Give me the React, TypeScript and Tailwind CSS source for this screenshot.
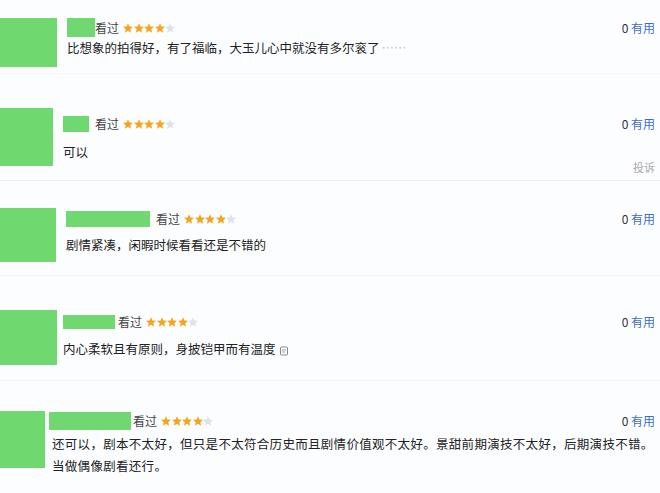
import React from "react";

type Row = {
  block: string;
  avatar: string;
  content: string;
  name: string;
  seen: string;
  body: string;
  text: string;
  more?: string;
  report?: boolean;
  icon?: boolean;
};

const rows: Row[] = [
  {
    block: "h-[74px] border-b border-[#f6f7f9]",
    avatar: "mt-[18px] h-[49px] w-[57px]",
    content: "pt-[18px] pl-[10px]",
    name: "h-[19px] w-[28px]",
    seen: "ml-0",
    body: "mt-[1px] leading-[20px]",
    text: "比想象的拍得好，有了福临，大玉儿心中就没有多尔衮了",
  },
  {
    block: "h-[107px] border-b border-[#eceef2]",
    avatar: "mt-[34px] h-[58px] w-[53px]",
    content: "pt-[41px] pl-[10px]",
    name: "h-[16px] w-[26px]",
    seen: "ml-[6px]",
    body: "mt-[9px] leading-[20px]",
    text: "可以",
    report: true,
  },
  {
    block: "h-[95px] border-b border-[#eff1f4]",
    avatar: "mt-[27px] h-[54px] w-[56px]",
    content: "pt-[29px] pl-[10px]",
    name: "h-[16px] w-[84px]",
    seen: "ml-[6px]",
    body: "mt-[7px] leading-[20px]",
    text: "剧情紧凑，闲暇时候看看还是不错的",
  },
  {
    block: "h-[105px] border-b border-[#eff1f4]",
    avatar: "mt-[34px] h-[55px] w-[57px]",
    content: "pt-[37px] pl-[6px]",
    name: "h-[14px] w-[52px]",
    seen: "ml-[3px]",
    body: "mt-[8px] leading-[20px]",
    text: "内心柔软且有原则，身披铠甲而有温度",
    icon: true,
  },
  {
    block: "h-[112px]",
    avatar: "mt-[30px] h-[57px] w-[45px]",
    content: "pt-[31px] pl-[4px]",
    name: "h-[18px] w-[82px]",
    seen: "ml-[2px]",
    body: "mt-[3px] pl-[3px] leading-[22px] tracking-[0.3px] whitespace-nowrap",
    text: "还可以，剧本不太好，但只是不太符合历史而且剧情价值观不太好。景甜前期演技不太好，后期演技不错。",
    more: "当做偶像剧看还行。",
  },
];

const Star = ({ on }: { on: boolean }) => (
  <svg viewBox="2 2 20 19" className="h-[10px] w-[10px]">
    <path
      d="M12 2l2.9 6.6 7.1.6-5.4 4.7 1.6 7-6.2-3.7-6.2 3.7 1.6-7L2 9.2l7.1-.6z"
      fill={on ? "#f5a41f" : "#dfe2e8"}
    />
  </svg>
);

const Review = ({ r }: { r: Row }) => (
  <div className={`flex items-start ${r.block}`}>
    <div className={`shrink-0 bg-[#6fd86f] ${r.avatar}`} />
    <div className={`flex-1 pr-[5px] ${r.content}`}>
      <div className="flex items-center justify-between">
        <div className="flex items-center">
          <div className={`bg-[#70d870] ${r.name}`} />
          <span className={`text-[12px] text-[#444] ${r.seen}`}>看过</span>
          <span className="ml-[4px] flex gap-[0.5px]">
            <Star on />
            <Star on />
            <Star on />
            <Star on />
            <Star on={false} />
          </span>
        </div>
        <div className="text-[12px] text-[#333]">
          0 <span className="text-[#3d6fb8]">有用</span>
        </div>
      </div>
      <p className={`text-[12.5px] text-[#222] ${r.body}`}>
        {r.text}
        {r.text.startsWith("比想象") && (
          <span className="ml-[2px] text-[#c4c4c4]">……</span>
        )}
        {r.icon && (
          <svg viewBox="0 0 8 10" className="ml-[4px] inline-block h-[10px] w-[8px] align-[-2px]">
            <rect x="0.5" y="1" width="7" height="8" rx="1" fill="none" stroke="#888" strokeWidth="1" />
            <path d="M2 4h4M2 6h3" stroke="#888" strokeWidth="0.8" />
          </svg>
        )}
        {r.more && (
          <>
            <br />
            {r.more}
          </>
        )}
      </p>
      {r.report && (
        <div className="mt-[-3px] text-right text-[11px] leading-[16px] text-[#aaa]">投诉</div>
      )}
    </div>
  </div>
);

export default function App() {
  return (
    <div
      className="h-[493px] w-[660px] overflow-hidden bg-[#fcfdff]"
      style={{ fontFamily: '"Noto Sans CJK SC", "Noto Sans", sans-serif' }}
    >
      {rows.map((r, i) => (
        <Review key={i} r={r} />
      ))}
    </div>
  );
}
